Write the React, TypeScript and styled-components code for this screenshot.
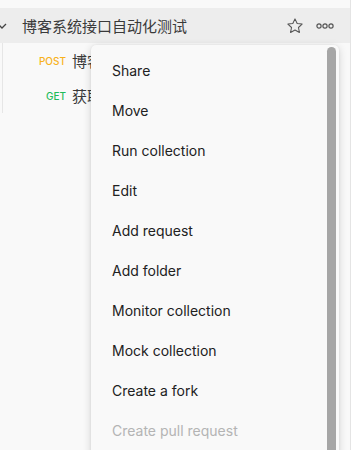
import React from "react";
import styled, { createGlobalStyle } from "styled-components";

const Global = createGlobalStyle`
  html, body { margin: 0; padding: 0; background: #f9f9f9; }
  * { box-sizing: border-box; }
`;

const Page = styled.div`
  position: relative;
  width: 361px;
  height: 450px;
  overflow: hidden;
  display: flex;
  font-family: Inter, "Noto Sans CJK SC", sans-serif;
  background: #ffffff;
`;

const Sidebar = styled.div`
  width: 351px;
  height: 100%;
  background: #f9f9f9;
  border-right: 1px solid #e4e4e4;
  padding-top: 8px;
  display: flex;
  flex-direction: column;
`;

const Header = styled.div`
  height: 35px;
  background: #ededed;
  display: flex;
  align-items: center;
  padding-right: 16px;
`;

const Chevron = styled.svg`
  width: 12px;
  height: 12px;
  margin-left: -4px;
  margin-right: 14px;
  flex: none;
`;

const Title = styled.div`
  flex: 1;
  font-size: 15px;
  color: #3a3a3a;
  font-family: "Noto Sans CJK SC", Inter, sans-serif;
  white-space: nowrap;
`;

const IconBtn = styled.svg<{ $gap: number }>`
  flex: none;
  margin-left: ${(p) => p.$gap}px;
`;

const List = styled.div`
  margin-left: 2px;
  border-left: 1px solid #e6e6e6;
  display: flex;
  flex-direction: column;
`;

const Row = styled.div`
  height: 35px;
  display: flex;
  align-items: center;
`;

const Method = styled.span<{ $color: string }>`
  width: 69px;
  text-align: right;
  font-size: 10px;
  font-weight: 500;
  color: ${(p) => p.$color};
  padding-right: 6px;
`;

const ReqName = styled.span`
  max-width: 19px;
  overflow: hidden;
  font-size: 15px;
  color: #3a3a3a;
  font-family: "Noto Sans CJK SC", Inter, sans-serif;
  white-space: nowrap;
`;

const Menu = styled.div`
  position: absolute;
  left: 91px;
  top: 45px;
  width: 248px;
  height: 430px;
  background: #f9f9f9;
  border-radius: 5px;
  box-shadow: 0 2px 8px rgba(0, 0, 0, 0.16), 0 0 2px rgba(0, 0, 0, 0.08);
  padding-top: 5px;
  display: flex;
  flex-direction: column;
`;

const Item = styled.div<{ $disabled?: boolean }>`
  height: 40px;
  display: flex;
  align-items: center;
  padding-left: 21px;
  font-size: 14px;
  color: ${(p) => (p.$disabled ? "#b4b4b4" : "#212121")};
`;

const Scrollbar = styled.div`
  position: absolute;
  right: 3px;
  top: 2px;
  width: 9px;
  height: 440px;
  border-radius: 5px;
  background: #a6a6a6;
`;

const items = [
  "Share",
  "Move",
  "Run collection",
  "Edit",
  "Add request",
  "Add folder",
  "Monitor collection",
  "Mock collection",
  "Create a fork",
];

export default function App() {
  return (
    <>
      <Global />
      <Page>
        <Sidebar>
          <Header>
            <Chevron viewBox="0 0 12 12">
              <path d="M2 4 L6 8 L10 4" fill="none" stroke="#444" strokeWidth="1.3" />
            </Chevron>
            <Title>博客系统接口自动化测试</Title>
            <IconBtn $gap={0} width="18" height="18" viewBox="0 0 24 24">
              <path
                d="M12 2.5 L14.9 8.6 L21.5 9.4 L16.6 14 L17.9 20.6 L12 17.3 L6.1 20.6 L7.4 14 L2.5 9.4 L9.1 8.6 Z"
                fill="none"
                stroke="#555"
                strokeWidth="1.4"
                strokeLinejoin="round"
              />
            </IconBtn>
            <IconBtn $gap={12} width="18" height="8" viewBox="0 0 18 8">
              <circle cx="3" cy="4" r="2.1" fill="none" stroke="#555" strokeWidth="1.2" />
              <circle cx="9" cy="4" r="2.1" fill="none" stroke="#555" strokeWidth="1.2" />
              <circle cx="15" cy="4" r="2.1" fill="none" stroke="#555" strokeWidth="1.2" />
            </IconBtn>
          </Header>
          <List>
            <Row>
              <Method $color="#f8b21c">POST</Method>
              <ReqName>博客列表</ReqName>
            </Row>
            <Row>
              <Method $color="#1fbb5a">GET</Method>
              <ReqName>获取博客详情</ReqName>
            </Row>
          </List>
        </Sidebar>
        <Menu>
          {items.map((t) => (
            <Item key={t}>{t}</Item>
          ))}
          <Item $disabled>Create pull request</Item>
          <Scrollbar />
        </Menu>
      </Page>
    </>
  );
}
